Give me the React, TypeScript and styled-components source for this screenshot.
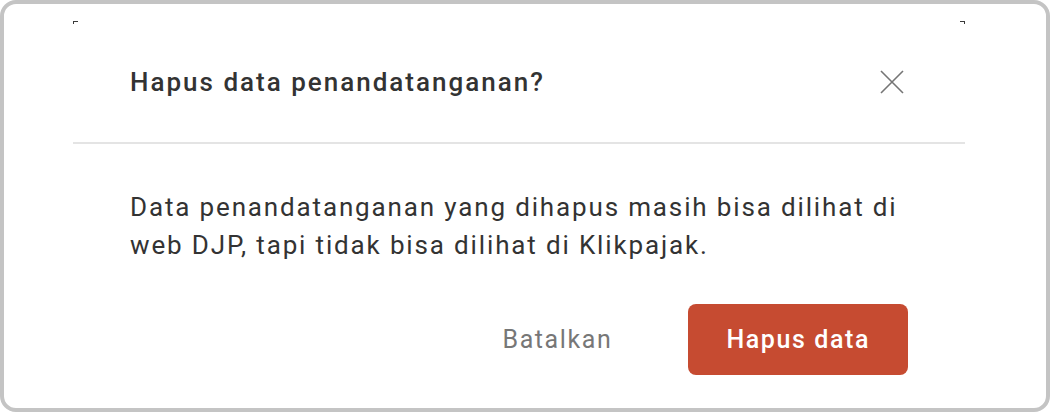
import React from 'react'
import styled, { createGlobalStyle } from 'styled-components'

const GlobalStyle = createGlobalStyle`
  html, body {
    margin: 0;
    padding: 0;
    background: #ffffff;
  }
  body {
    font-family: Roboto, "Noto Sans", "Liberation Sans", sans-serif;
    -webkit-font-smoothing: antialiased;
  }
`

const Frame = styled.div`
  width: 1050px;
  height: 412px;
  box-sizing: border-box;
  border: 4px solid #c4c4c4;
  border-radius: 16px;
  background: #ffffff;
  padding: 17px 81px 0 69px;
  overflow: hidden;
`

const Dialog = styled.section`
  position: relative;
  display: flex;
  flex-direction: column;
  background: #ffffff;

  /* little corner marks left over from the modal edge */
  &::before,
  &::after {
    content: '';
    position: absolute;
    top: 0;
    width: 4px;
    height: 2px;
    border-top: 1px solid #3a3a3a;
  }
  &::before {
    left: 0;
    border-left: 1px solid #3a3a3a;
  }
  &::after {
    right: 0;
    border-right: 1px solid #3a3a3a;
  }
`

const Header = styled.header`
  height: 121px;
  display: flex;
  align-items: center;
  justify-content: space-between;
  padding: 0 57px;
  border-bottom: 2px solid #e4e4e4;
`

const Title = styled.h2`
  margin: 0;
  font-size: 26px;
  font-weight: 500;
  letter-spacing: 2px;
  color: #333333;
`

const CloseButton = styled.button`
  width: 32px;
  height: 32px;
  padding: 0;
  border: none;
  background: none;
  display: flex;
  align-items: center;
  justify-content: center;
  cursor: pointer;
  color: #757575;
`

const Body = styled.p`
  margin: 0;
  padding: 44px 40px 0 57px;
  font-size: 26px;
  font-weight: 400;
  line-height: 38px;
  letter-spacing: 1.85px;
  color: #333333;
`

const Footer = styled.footer`
  display: flex;
  justify-content: flex-end;
  align-items: center;
  gap: 38px;
  padding: 40px 57px 30px;
`

const ActionButton = styled.button<{ $primary?: boolean }>`
  height: 71px;
  padding: 0 38px;
  border: none;
  border-radius: 8px;
  font-family: inherit;
  font-size: 25px;
  font-weight: ${p => (p.$primary ? 500 : 400)};
  letter-spacing: 1.6px;
  cursor: pointer;
  background: ${p => (p.$primary ? '#c64b31' : 'transparent')};
  color: ${p => (p.$primary ? '#ffffff' : '#777777')};
`

const CloseIcon = () => (
  <svg width="24" height="24" viewBox="0 0 24 24" fill="none">
    <path d="M1 1L23 23M23 1L1 23" stroke="currentColor" strokeWidth="1.6" />
  </svg>
)

export default function App() {
  return (
    <>
      <GlobalStyle />
      <Frame>
        <Dialog>
          <Header>
            <Title>Hapus data penandatanganan?</Title>
            <CloseButton aria-label="Tutup">
              <CloseIcon />
            </CloseButton>
          </Header>
          <Body>
            Data penandatanganan yang dihapus masih bisa dilihat di web DJP, tapi tidak bisa dilihat di Klikpajak.
          </Body>
          <Footer>
            <ActionButton>Batalkan</ActionButton>
            <ActionButton $primary>Hapus data</ActionButton>
          </Footer>
        </Dialog>
      </Frame>
    </>
  )
}
